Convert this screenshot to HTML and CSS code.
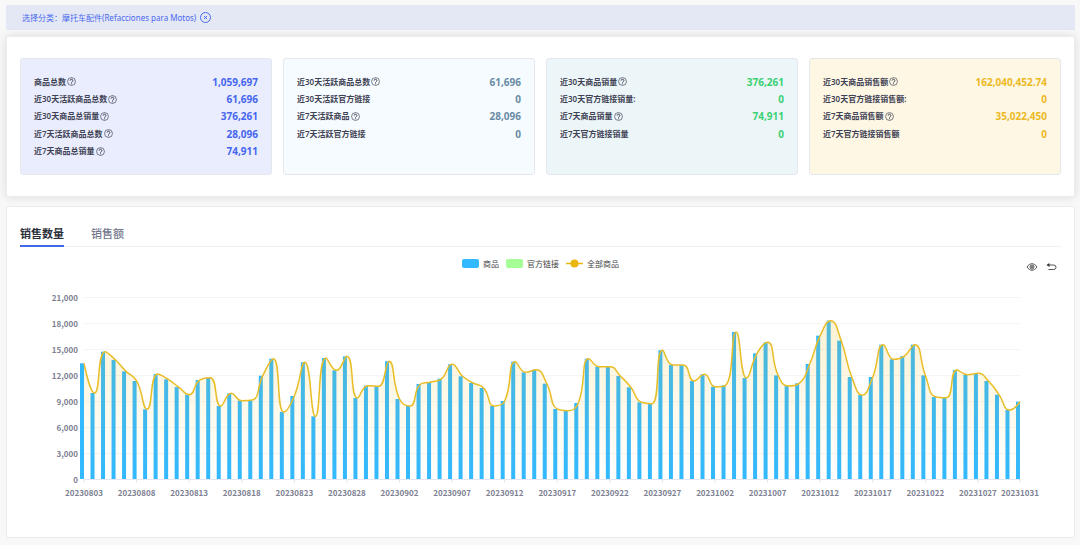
FILE: index.html
```html
<!DOCTYPE html>
<html lang="zh-CN">
<head>
    <meta charset="UTF-8">
    <meta name="viewport" content="width=device-width, initial-scale=1.0">
    <title>类目分析</title>
    <link rel="stylesheet" href="styles.css">
</head>
<body>
    <svg width="0" height="0" class="sprite" aria-hidden="true">
        <symbol id="help" viewBox="0 0 16 16">
            <circle cx="8" cy="8" r="7" fill="none" stroke="currentColor" stroke-width="1.2"/>
            <path d="M5.5 6.4a2.5 2.4 0 1 1 3.7 2.1C8.3 9 8 9.3 8 10.2" fill="none" stroke="currentColor" stroke-width="1.7"/>
            <circle cx="8" cy="12.1" r="1" fill="currentColor"/>
        </symbol>
    </svg>

    <div class="category-bar">
        <span>选择分类：摩托车配件(Refacciones para Motos)</span>
        <button type="button" class="clear-btn" aria-label="清除分类">
            <svg viewBox="0 0 22 22"><circle cx="11" cy="11" r="10"/><path d="M8 8l6 6M14 8l-6 6"/></svg>
        </button>
    </div>

    <section class="panel summary">
        <dl class="card card-blue">
            <div class="row"><dt>商品总数<svg class="help"><use href="#help"/></svg></dt><dd>1,059,697</dd></div>
            <div class="row"><dt>近30天活跃商品总数<svg class="help"><use href="#help"/></svg></dt><dd>61,696</dd></div>
            <div class="row"><dt>近30天商品总销量<svg class="help"><use href="#help"/></svg></dt><dd>376,261</dd></div>
            <div class="row"><dt>近7天活跃商品总数<svg class="help"><use href="#help"/></svg></dt><dd>28,096</dd></div>
            <div class="row"><dt>近7天商品总销量<svg class="help"><use href="#help"/></svg></dt><dd>74,911</dd></div>
        </dl>
        <dl class="card card-slate">
            <div class="row"><dt>近30天活跃商品总数<svg class="help"><use href="#help"/></svg></dt><dd>61,696</dd></div>
            <div class="row"><dt>近30天活跃官方链接</dt><dd>0</dd></div>
            <div class="row"><dt>近7天活跃商品<svg class="help"><use href="#help"/></svg></dt><dd>28,096</dd></div>
            <div class="row"><dt>近7天活跃官方链接</dt><dd>0</dd></div>
        </dl>
        <dl class="card card-green">
            <div class="row"><dt>近30天商品销量<svg class="help"><use href="#help"/></svg></dt><dd>376,261</dd></div>
            <div class="row"><dt>近30天官方链接销量:</dt><dd>0</dd></div>
            <div class="row"><dt>近7天商品销量<svg class="help"><use href="#help"/></svg></dt><dd>74,911</dd></div>
            <div class="row"><dt>近7天官方链接销量</dt><dd>0</dd></div>
        </dl>
        <dl class="card card-yellow">
            <div class="row"><dt>近30天商品销售额<svg class="help"><use href="#help"/></svg></dt><dd>162,040,452.74</dd></div>
            <div class="row"><dt>近30天官方链接销售额:</dt><dd>0</dd></div>
            <div class="row"><dt>近7天商品销售额<svg class="help"><use href="#help"/></svg></dt><dd>35,022,450</dd></div>
            <div class="row"><dt>近7天官方链接销售额</dt><dd>0</dd></div>
        </dl>
    </section>

    <section class="panel trend">
        <div class="tabs" role="tablist">
            <button type="button" class="tab active" role="tab" aria-selected="true">销售数量</button>
            <button type="button" class="tab" role="tab" aria-selected="false">销售额</button>
        </div>

        <div class="chart-head">
            <ul class="legend">
                <li><span class="swatch swatch-blue"></span>商品</li>
                <li><span class="swatch swatch-green"></span>官方链接</li>
                <li>
                    <svg class="swatch" viewBox="0 0 17 9"><path d="M0 4.500h17" stroke="#e8b60c" stroke-width="1.500"/><circle cx="8.500" cy="4.500" r="4" fill="#e8b60c"/></svg>
                    全部商品
                </li>
            </ul>
            <div class="tools">
                <button type="button" aria-label="数据视图">
                    <svg viewBox="0 0 24 16"><path d="M2 8c3-4.500 6.500-6.500 10-6.500S19 3.500 22 8c-3 4.500-6.500 6.500-10 6.500S5 12.500 2 8z"/><circle cx="12" cy="8" r="4"/><circle cx="12" cy="8" r="1.500"/></svg>
                </button>
                <button type="button" aria-label="还原">
                    <svg viewBox="0 0 24 16"><path d="M5 4h12.500a4.500 4.500 0 0 1 0 9H7"/><path class="solid" d="M9 0v8L3 4z"/></svg>
                </button>
            </div>
        </div>

        <svg id="chart" class="chart" role="img" aria-label="销售数量"></svg>
    </section>

    <script src="chart.js"></script>
</body>
</html>
```
FILE: styles.css
```css
* {
    box-sizing: border-box;
}
body {
    margin: 0;
    padding: 5px 5px 8px 6px;
    background-color: #f8f8f8;
    color: #3f4254;
    font-family: "Noto Sans", "Noto Sans CJK SC", sans-serif;
    font-size: 8px;
}
button {
    padding: 0;
    border: none;
    background: none;
    color: inherit;
    font: inherit;
    cursor: pointer;
}
.sprite {
    position: absolute;
}
.category-bar {
    display: flex;
    align-items: center;
    gap: 4px;
    height: 25px;
    padding: 0 16px;
    background-color: #e4e8f5;
    color: #4a68ee;
}
.clear-btn {
    display: flex;
}
.clear-btn svg {
    width: 11px;
    height: 11px;
    fill: none;
    stroke: currentColor;
    stroke-width: 2;
}
.panel {
    background: white;
    border: 1px solid #ebebf0;
    border-radius: 2px;
}
.summary {
    display: grid;
    grid-template-columns: repeat(4, 1fr);
    gap: 11px;
    margin-top: 6px;
    padding: 21px 13px;
    box-shadow: 0 0 10px rgba(0, 0, 0, 0.12);
}
.card {
    display: grid;
    grid-template-rows: repeat(5, 1fr);
    min-height: 117px;
    margin: 0;
    padding: 14px 13px;
    border: 1px solid #e4e8ee;
    border-radius: 3px;
}
.row {
    display: flex;
    align-items: center;
    justify-content: space-between;
    line-height: 16px;
}
dt {
    display: flex;
    align-items: center;
    gap: 1px;
    font-weight: 600;
}
dd {
    margin: 0;
    font-size: 10px;
    font-weight: bold;
}
.help {
    width: 9px;
    height: 9px;
}
.card-blue {
    background-color: #e9edfd;
}
.card-blue dd {
    color: #4766ee;
}
.card-slate {
    background-color: #f6fbff;
}
.card-slate dd {
    color: #6a8ba5;
}
.card-green {
    background-color: #ecf6f9;
}
.card-green dd {
    color: #3bd073;
}
.card-yellow {
    background-color: #fdf7e4;
}
.card-yellow dd {
    color: #ecb91f;
}
.trend {
    margin-top: 9px;
    padding: 14px 13px 24px;
}
.tabs {
    display: flex;
    gap: 27px;
    border-bottom: 1px solid #eff0f3;
}
.tab {
    height: 26px;
    margin-bottom: -1px;
    border-bottom: 2px solid transparent;
    color: #70768a;
    font-size: 11px;
    font-weight: 500;
}
.tab.active {
    border-bottom-color: #4169e8;
    color: #2b2f3a;
    font-weight: bold;
}
.chart-head {
    display: grid;
    grid-template-columns: 1fr auto 1fr;
    align-items: center;
    height: 36px;
}
.legend {
    display: flex;
    grid-column: 2;
    gap: 7px;
    margin: 0;
    padding: 0 0 4px;
    color: #444;
    list-style: none;
}
.legend li {
    display: flex;
    align-items: center;
    gap: 4px;
}
.swatch {
    width: 17px;
    height: 9px;
    border-radius: 2px;
}
.swatch-blue {
    background-color: #33b9ff;
}
.swatch-green {
    background-color: #a6ff96;
}
.tools {
    display: flex;
    justify-content: flex-end;
    gap: 7px;
    padding: 4px 4px 0 0;
}
.tools button {
    display: flex;
}
.tools svg {
    width: 12px;
    height: 8px;
    fill: none;
    stroke: #555;
    stroke-width: 2;
}
.tools .solid {
    fill: #333;
    stroke: none;
}
.chart {
    display: block;
    width: 100%;
    height: 230px;
}
.chart text {
    fill: #7c8091;
    font-family: "Noto Sans CJK SC", sans-serif;
    font-size: 8px;
    font-weight: bold;
}
.chart .grid {
    stroke: #f5f5f7;
}
.chart .axis {
    stroke: #e4e7f0;
}
.chart .bar {
    fill: #33b9ff;
}
.chart .line {
    fill: none;
    stroke: #e8bd28;
    stroke-width: 1.5;
}
```
FILE: chart.js
```js
const values = [
    13350, 9920, 14690, 13730, 12420, 11310, 8040, 12110, 11500, 10610,
    9730, 11420, 11690, 8420, 9880, 9040, 9110, 11920, 13880, 7730,
    9580, 13460, 7230, 13960, 12540, 14150, 9350, 10770, 10690, 13580,
    9230, 8420, 10960, 11190, 11580, 13230, 11850, 11080, 10500, 8420,
    9000, 13540, 12310, 12610, 11000, 8080, 7880, 8770, 13880, 12960,
    12960, 11880, 10580, 8850, 8690, 14850, 13150, 13150, 11310, 12080,
    10650, 10810, 16960, 11650, 14500, 15770, 11960, 10730, 11040, 13270,
    16540, 18270, 15960, 11770, 9690, 11770, 15500, 13810, 14190, 15500,
    11960, 9460, 9380, 12580, 12040, 12190, 11310, 9730, 7960, 8920
];
const chart = document.getElementById('chart');
const margin = { top: 14, right: 41, left: 64 };
const plotHeight = 182;
const maxValue = 21000;

function dateLabel(i) {
    return new Date(Date.UTC(2023, 7, 3 + i)).toISOString().slice(0, 10).replace(/-/g, '');
}

function clamp(v, a, b) {
    return Math.max(Math.min(v, Math.max(a, b)), Math.min(a, b));
}

// Smooth curve whose control points never overshoot the neighbouring values
function smoothPath(points) {
    let d = `M${points[0]}`;
    let cp0 = points[0];
    for (let i = 1; i < points.length; i++) {
        const prev = points[i - 1];
        const cur = points[i];
        const next = points[i + 1];
        let cp1 = cur;
        let nextCp0 = cur;
        if (next) {
            const lenPrev = Math.hypot(cur[0] - prev[0], cur[1] - prev[1]);
            const lenNext = Math.hypot(next[0] - cur[0], next[1] - cur[1]);
            const ratio = lenNext / (lenNext + lenPrev);
            nextCp0 = cur.map((c, k) => clamp(c + (next[k] - prev[k]) * 0.5 * ratio, next[k], c));
            cp1 = cur.map((c, k) => clamp(c - (nextCp0[k] - c) * lenPrev / lenNext, prev[k], c));
            nextCp0 = cur.map((c, k) => c + (c - cp1[k]) * lenNext / lenPrev);
        }
        d += `C${cp0} ${cp1} ${cur}`;
        cp0 = nextCp0;
    }
    return d;
}

function draw() {
    const width = chart.clientWidth;
    const right = width - margin.right;
    const bottom = margin.top + plotHeight;
    const step = (right - margin.left) / (values.length - 1);
    const x = i => margin.left + i * step;
    const y = v => bottom - v / maxValue * plotHeight;

    let html = `<defs><linearGradient id="fade" x1="0" y1="0" x2="0" y2="1">
        <stop offset="0" stop-color="#e8b60c" stop-opacity="0.18"/>
        <stop offset="1" stop-color="#e8b60c" stop-opacity="0"/>
    </linearGradient></defs>`;

    for (let v = 0; v <= maxValue; v += 3000) {
        const ly = Math.round(y(v)) + 0.5;
        html += `<line class="${v ? 'grid' : 'axis'}" x1="${margin.left}" x2="${right}" y1="${ly}" y2="${ly}"/>`;
        html += `<text x="${margin.left - 6}" y="${ly + 3}" text-anchor="end">${v.toLocaleString('en-US')}</text>`;
    }

    values.forEach((v, i) => {
        html += `<rect class="bar" x="${x(i) - 4}" y="${y(v)}" width="4" height="${bottom - y(v)}"/>`;
        if (i % 5 === 0 || i === values.length - 1) {
            html += `<line class="axis" x1="${x(i)}" x2="${x(i)}" y1="${bottom}" y2="${bottom + 4}"/>`;
            html += `<text x="${x(i)}" y="${bottom + 17}" text-anchor="middle">${dateLabel(i)}</text>`;
        }
    });

    const path = smoothPath(values.map((v, i) => [x(i), y(v)]));
    html += `<path d="${path}L${right},${bottom}L${margin.left},${bottom}Z" fill="url(#fade)"/>`;
    html += `<path class="line" d="${path}"/>`;
    chart.innerHTML = html;
}

draw();
window.addEventListener('resize', draw);
```
